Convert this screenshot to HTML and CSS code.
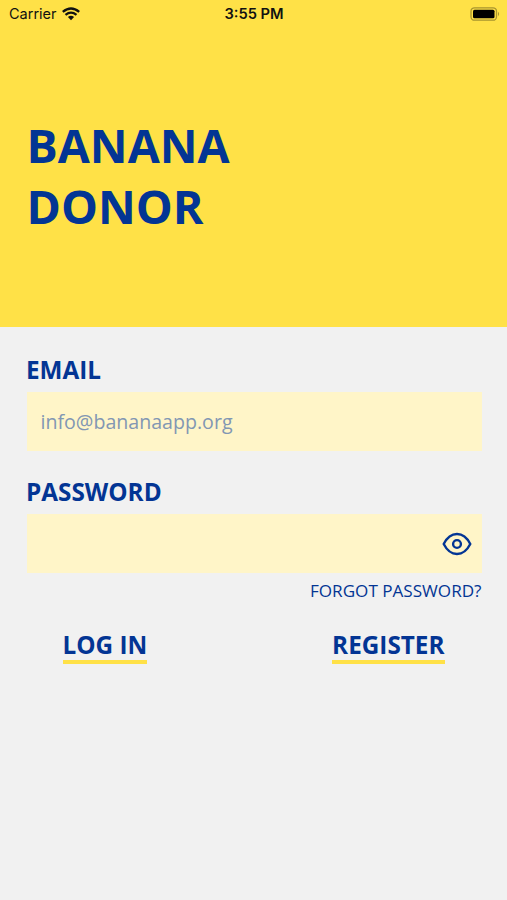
FILE: index.html
```
<!DOCTYPE html>
<html lang="en">
<head>
    <meta charset="UTF-8">
    <title>Banana Donor</title>
    <link rel="stylesheet" href="styles.css">
</head>
<body>
<div class="header">
    <div class="statusBar">
        <div class="carrier">
            <span>Carrier</span>
            <svg class="wifi" viewBox="0 0 18 14">
                <path d="M0.8 4.9 Q9 -2 17.2 4.9 M3.5 7.8 Q9 3.4 14.5 7.8" fill="none" stroke="#111" stroke-width="2.3"/>
                <path d="M5.9 10 Q9 7.4 12.1 10 L9 13.2 Z" fill="#111"/>
            </svg>
        </div>
        <span class="time">3:55 PM</span>
        <svg class="battery" viewBox="0 0 30 14">
            <rect x="1" y="0.8" width="25.5" height="12.4" rx="3.5" fill="none" stroke="#a8942f" stroke-width="1.3"/>
            <rect x="3" y="2.7" width="21.5" height="8.6" rx="1.5" fill="#000"/>
            <path d="M28 4.8 Q30.2 7 28 9.2 Z" fill="#a8942f"/>
        </svg>
    </div>
    <h1>BANANA<br>DONOR</h1>
</div>
<form class="login">
    <label for="email">EMAIL</label>
    <div class="field">
        <input id="email" type="email" placeholder="info@bananaapp.org">
    </div>
    <label for="password">PASSWORD</label>
    <div class="field">
        <input id="password" type="password">
        <svg class="eye" viewBox="0 0 30 24">
            <path d="M1.7 12 C3.5 8.5 8 2 15 2 C22 2 26.5 8.5 28.3 12 C26.5 15.5 22 22 15 22 C8 22 3.5 15.5 1.7 12 Z"/>
            <circle cx="15" cy="12" r="3.9"/>
        </svg>
    </div>
    <a class="forgot">FORGOT PASSWORD?</a>
    <div class="buttons">
        <a class="btn">LOG IN</a>
        <a class="btn">REGISTER</a>
    </div>
</form>
</body>
</html>
```
FILE: styles.css
```
*{
    margin: 0;
    padding: 0;
    box-sizing: border-box;
}
body{
    min-height: 900px;
    background-color: #f1f1f1;
    color: #033594;
    font-family: "Open Sans", sans-serif;
}
.header{
    height: 327px;
    background-color: #ffe147;
}
.statusBar{
    display: grid;
    grid-template-columns: 1fr auto 1fr;
    align-items: center;
    height: 27px;
    padding: 0 7px 0 9px;
    color: #111;
    font-family: Inter, sans-serif;
    font-size: 14.5px;
}
.carrier{
    display: flex;
    align-items: center;
    gap: 5px;
}
.wifi{
    width: 18px;
    height: 14px;
}
.time{
    padding-right: 1px;
    font-size: 14.7px;
    font-weight: 600;
}
.battery{
    width: 30px;
    height: 14px;
    justify-self: end;
}
h1{
    padding: 88px 26.5px 0;
    font-size: 46.5px;
    font-weight: 700;
    line-height: 61px;
}
.login{
    padding: 28px 25.5px 0 26.5px;
}
label{
    display: block;
    height: 37px;
    margin-left: -0.5px;
    font-size: 24.3px;
    font-weight: 700;
    line-height: 30px;
}
.field{
    display: flex;
    align-items: center;
    height: 59px;
    margin-bottom: 26px;
    padding: 0 9.5px 0 14px;
    background-color: #fff5c8;
}
.field input{
    flex: 1;
    min-width: 0;
    border: 0;
    outline: 0;
    background: none;
    color: #033594;
    font-family: inherit;
    font-size: 19.6px;
}
.field input::placeholder{
    color: #8297b3;
}
.eye{
    width: 30px;
    height: 24px;
    fill: none;
    stroke: #033594;
    stroke-width: 2.4;
    stroke-linejoin: round;
}
.forgot{
    display: block;
    margin-top: -20px;
    font-size: 17.1px;
    line-height: 24px;
    text-align: right;
}
.buttons{
    display: flex;
    justify-content: space-between;
    padding: 27px 37px 0 36px;
}
.btn{
    border-bottom: 4px solid #ffe147;
    font-size: 24.3px;
    font-weight: 700;
    line-height: 30px;
}
```
